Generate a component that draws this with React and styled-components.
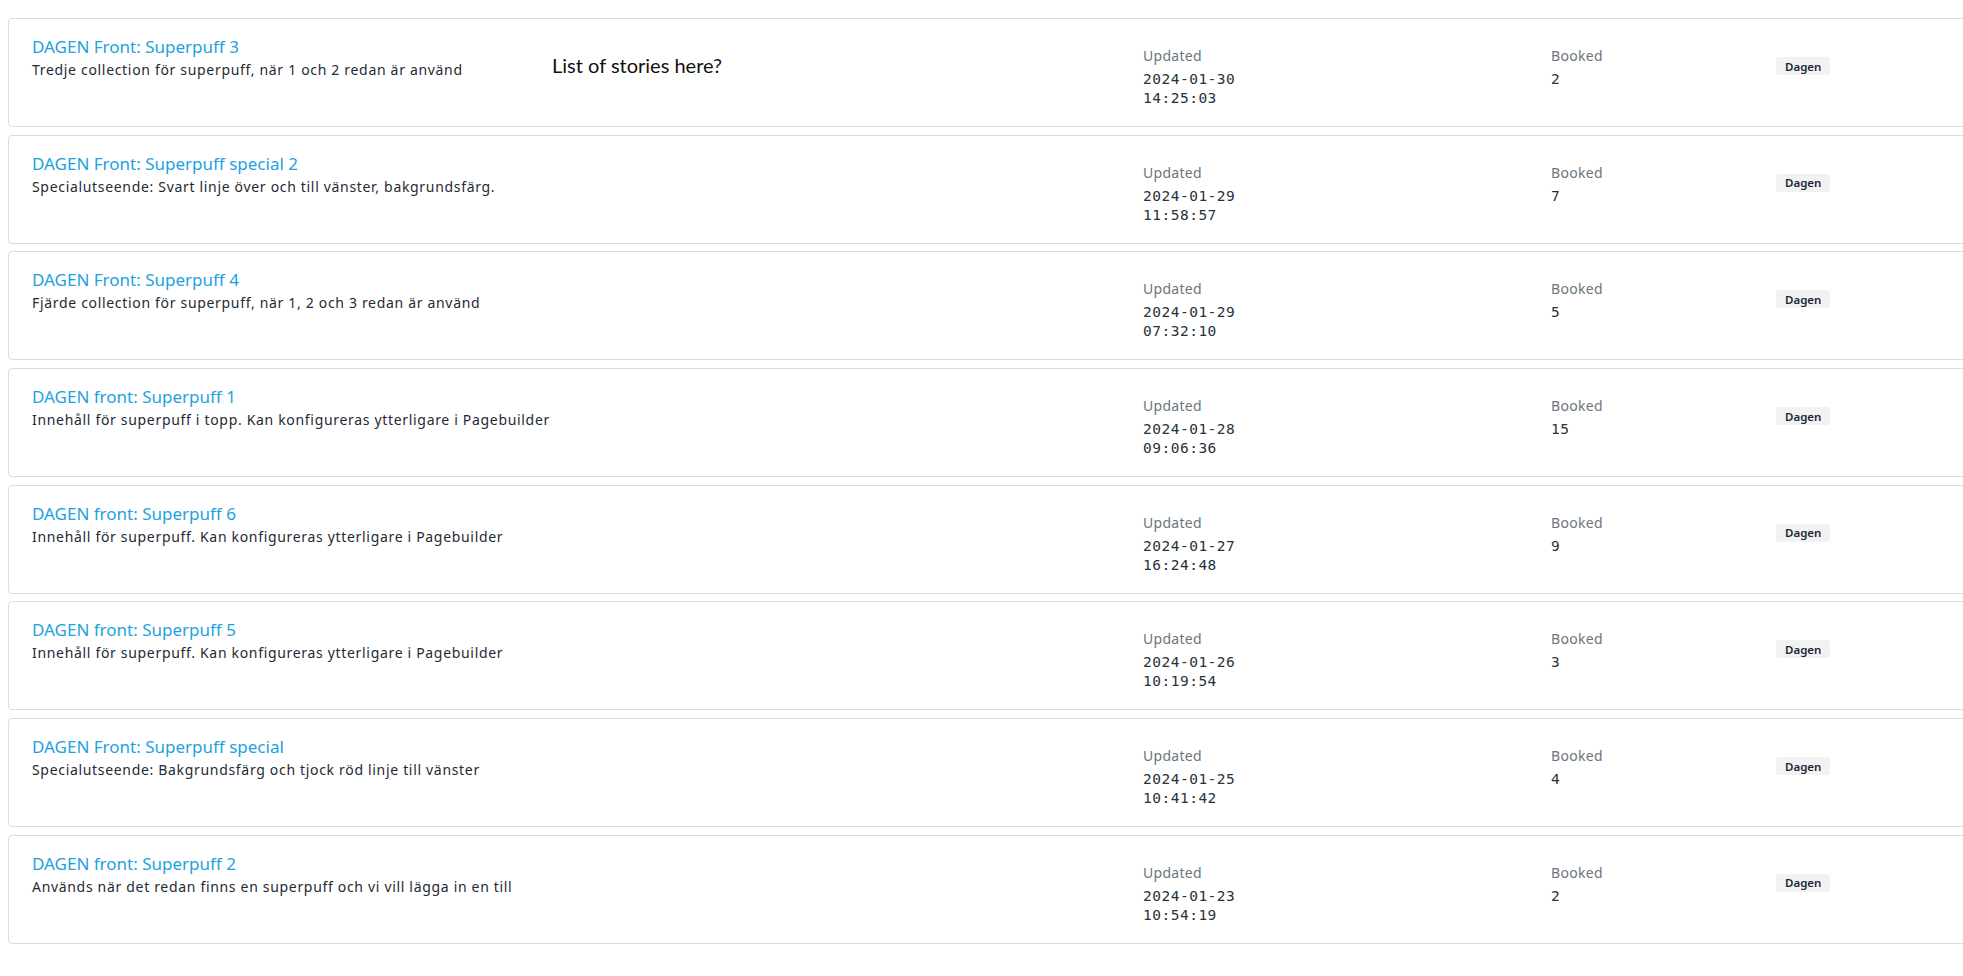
import React from "react"
import styled, { createGlobalStyle } from "styled-components"

const GlobalStyle = createGlobalStyle`
  html, body {
    margin: 0;
    padding: 0;
    background: #ffffff;
    overflow: hidden;
  }
  body {
    font-family: "Noto Sans", "Liberation Sans", sans-serif;
    color: #1f2a33;
  }
`

const Page = styled.div`
  position: relative;
  width: 100vw;
  height: 100vh;
  padding: 18px 0 0 8px;
  box-sizing: border-box;
`

const List = styled.div`
  display: flex;
  flex-direction: column;
  gap: 7.7px;
  width: calc(100% + 40px);
`

const Card = styled.div`
  box-sizing: border-box;
  height: 109px;
  border: 1px solid #dcdcdc;
  border-radius: 4px;
  background: #fff;
  padding: 17px 0 0 23px;
  display: grid;
  grid-template-columns: 1111px 408px 225px 1fr;
  align-items: start;
`

const Main = styled.div`
  display: flex;
  flex-direction: column;
`

const Title = styled.a`
  font-size: 17px;
  line-height: 22px;
  color: #1ea1df;
  text-decoration: none;
  cursor: pointer;
`

const Description = styled.div`
  margin-top: 1px;
  font-size: 14px;
  line-height: 21px;
  color: #1f2a33;
  letter-spacing: 0.68px;
`

const Stat = styled.div`
  display: flex;
  flex-direction: column;
  padding-top: 9px;
`

const Label = styled.div`
  font-size: 14px;
  line-height: 21px;
  letter-spacing: 0.3px;
  color: #6b757d;
  margin-bottom: 4px;
`

const Value = styled.div`
  font-family: "DejaVu Sans Mono", "Liberation Mono", monospace;
  font-size: 14.5px;
  line-height: 19px;
  letter-spacing: 0.5px;
  color: #26323c;
`

const Tags = styled.div`
  display: flex;
  gap: 6px;
  padding-top: 21px;
`

const Tag = styled.span`
  display: inline-flex;
  align-items: center;
  height: 18px;
  padding: 0 9px;
  border-radius: 3px;
  background: #f2f2f3;
  font-size: 11.5px;
  font-weight: 600;
  color: #1c2733;
`

const Note = styled.div`
  position: absolute;
  left: 552px;
  top: 53px;
  font-family: "Lato", "Open Sans", sans-serif;
  font-size: 20px;
  line-height: 24px;
  color: #111;
`

const collections = [
  {
    title: "DAGEN Front: Superpuff 3",
    description: "Tredje collection för superpuff, när 1 och 2 redan är använd",
    date: "2024-01-30",
    time: "14:25:03",
    booked: 2,
  },
  {
    title: "DAGEN Front: Superpuff special 2",
    description: "Specialutseende: Svart linje över och till vänster, bakgrundsfärg.",
    date: "2024-01-29",
    time: "11:58:57",
    booked: 7,
  },
  {
    title: "DAGEN Front: Superpuff 4",
    description: "Fjärde collection för superpuff, när 1, 2 och 3 redan är använd",
    date: "2024-01-29",
    time: "07:32:10",
    booked: 5,
  },
  {
    title: "DAGEN front: Superpuff 1",
    description: "Innehåll för superpuff i topp. Kan konfigureras ytterligare i Pagebuilder",
    date: "2024-01-28",
    time: "09:06:36",
    booked: 15,
  },
  {
    title: "DAGEN front: Superpuff 6",
    description: "Innehåll för superpuff. Kan konfigureras ytterligare i Pagebuilder",
    date: "2024-01-27",
    time: "16:24:48",
    booked: 9,
  },
  {
    title: "DAGEN front: Superpuff 5",
    description: "Innehåll för superpuff. Kan konfigureras ytterligare i Pagebuilder",
    date: "2024-01-26",
    time: "10:19:54",
    booked: 3,
  },
  {
    title: "DAGEN Front: Superpuff special",
    description: "Specialutseende: Bakgrundsfärg och tjock röd linje till vänster",
    date: "2024-01-25",
    time: "10:41:42",
    booked: 4,
  },
  {
    title: "DAGEN front: Superpuff 2",
    description: "Används när det redan finns en superpuff och vi vill lägga in en till",
    date: "2024-01-23",
    time: "10:54:19",
    booked: 2,
  },
]

const CollectionCard = ({ item }) => (
  <Card>
    <Main>
      <Title>{item.title}</Title>
      <Description>{item.description}</Description>
    </Main>
    <Stat>
      <Label>Updated</Label>
      <Value>{item.date}</Value>
      <Value>{item.time}</Value>
    </Stat>
    <Stat>
      <Label>Booked</Label>
      <Value>{item.booked}</Value>
    </Stat>
    <Tags>
      <Tag>Dagen</Tag>
    </Tags>
  </Card>
)

export default function App() {
  return (
    <Page>
      <GlobalStyle />
      <List>
        {collections.map(item => (
          <CollectionCard key={item.title} item={item} />
        ))}
      </List>
      <Note>List of stories here?</Note>
    </Page>
  )
}
